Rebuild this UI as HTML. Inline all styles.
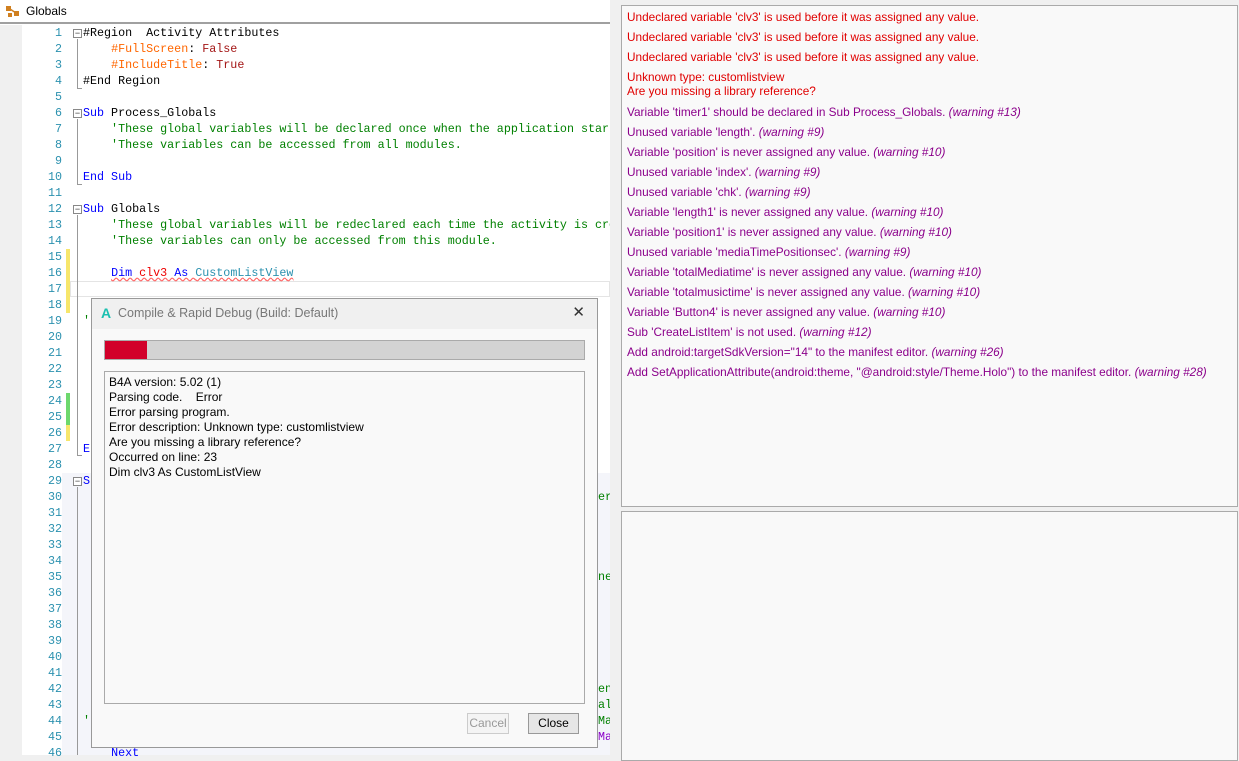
<!DOCTYPE html>
<html><head><meta charset="utf-8"><style>
*{margin:0;padding:0;box-sizing:border-box}
body{width:1239px;height:755px;background:#f0f0f0;position:relative;overflow:hidden;font-family:"Liberation Sans",sans-serif}
.abs{position:absolute}
#ed{left:0;top:0;width:610px;height:755px;background:#fff}
#title{left:0;top:0;width:610px;height:24px;background:#fff;border-bottom:2px solid #a0a0a0;font-size:12px;line-height:22px;padding-left:26px;color:#000}
#strip{left:0;top:25px;width:22px;height:730px;background:#f0f0f0}
#shade{left:62px;top:473px;width:548px;height:282px;background:#f4f5fa}
.ln{position:absolute;left:22px;width:40px;text-align:right;font-family:"Liberation Mono",monospace;font-size:11.7px;color:#2b91af;height:16px;line-height:16px}
.code{position:absolute;left:83px;font-family:"Liberation Mono",monospace;font-size:11.7px;height:16px;line-height:16px;white-space:pre;color:#000}
.cm{color:#008000}.kw{color:#0000ff}.dir{color:#ff6600}.val{color:#a31515}.ty{color:#2b91af}.rd{color:#e00}
.fold{position:absolute;left:73px;width:9px;height:9px;border:1px solid #888;background:#fff;font-size:9px;line-height:6px;text-align:center;color:#333}
.vl{position:absolute;left:77px;width:1px;background:#999}
.bar{position:absolute;left:66px;width:4px}
#rp1{left:621px;top:5px;width:617px;height:502px;background:#f9f9f9;border:1px solid #aaa}
#rp2{left:621px;top:511px;width:617px;height:250px;background:#f9f9f9;border:1px solid #aaa}
.m{position:absolute;left:5px;font-size:11.8px;white-space:nowrap;line-height:14px}
.r{color:#e00000}.p{color:#8b008b}.m i{color:#8b008b}
#dlg{left:91px;top:298px;width:507px;height:450px;background:#f9f9f9;border:1px solid #999}
#dt{left:0;top:0;width:505px;height:30px;background:#f0f0f0;font-size:12.5px;line-height:28px;color:#777;padding-left:26px}
#box{left:12px;top:72px;width:481px;height:333px;border:1px solid #aaa;background:#f9f9f9;font-size:12px;line-height:15px;padding:3px 4px;color:#000}
.btn{position:absolute;top:414px;height:21px;border:1px solid #aaa;font-size:12px;text-align:center;line-height:19px}
</style></head><body>
<div id="ed" class="abs"></div>
<div id="shade" class="abs"></div>
<div id="strip" class="abs"></div>
<div id="title" class="abs">Globals</div>
<svg class="abs" style="left:5px;top:5px" width="16" height="14" viewBox="0 0 16 14"><rect x="1" y="1" width="5" height="5" fill="#d08020"/><rect x="9" y="6" width="5" height="5" fill="#d08020"/><rect x="3" y="8" width="4" height="4" fill="#d08020"/><path d="M5 4 L11 8" stroke="#d08020" stroke-width="1.5"/></svg>

<div class="abs" style="left:70px;top:281px;width:540px;height:16px;border:1px solid #e4e4e4;background:#fff"></div>

<div class="bar" style="top:249px;height:64px;background:#f7e66b"></div>
<div class="bar" style="top:393px;height:32px;background:#6dd86d"></div>
<div class="bar" style="top:425px;height:16px;background:#f7e66b"></div>

<div class="fold" style="top:29px">−</div><div class="vl" style="top:39px;height:50px"></div>
<div class="abs" style="left:77px;top:88px;width:5px;height:1px;background:#999"></div>
<div class="fold" style="top:109px">−</div><div class="vl" style="top:119px;height:66px"></div>
<div class="abs" style="left:77px;top:184px;width:5px;height:1px;background:#999"></div>
<div class="fold" style="top:205px">−</div><div class="vl" style="top:215px;height:240px"></div>
<div class="abs" style="left:77px;top:455px;width:5px;height:1px;background:#999"></div>
<div class="fold" style="top:477px">−</div><div class="vl" style="top:487px;height:268px"></div>

<div class="code" style="top:25px">#Region  Activity Attributes</div>
<div class="code" style="top:41px">    <span class="dir">#FullScreen</span>: <span class="val">False</span></div>
<div class="code" style="top:57px">    <span class="dir">#IncludeTitle</span>: <span class="val">True</span></div>
<div class="code" style="top:73px">#End Region</div>
<div class="code" style="top:105px"><span class="kw">Sub</span> Process_Globals</div>
<div class="code cm" style="top:121px">    'These global variables will be declared once when the application starts.</div>
<div class="code cm" style="top:137px">    'These variables can be accessed from all modules.</div>
<div class="code" style="top:169px"><span class="kw">End Sub</span></div>
<div class="code" style="top:201px"><span class="kw">Sub</span> Globals</div>
<div class="code cm" style="top:217px">    'These global variables will be redeclared each time the activity is created.</div>
<div class="code cm" style="top:233px">    'These variables can only be accessed from this module.</div>
<div class="code" style="top:265px">    <span style="text-decoration:underline wavy #f66"><span class="kw">Dim</span> <span class="rd">clv3</span> <span class="kw">As</span> <span class="ty">CustomListView</span></span></div>
<div class="code cm" style="top:313px">'</div>
<div class="code kw" style="top:441px">E</div>
<div class="code kw" style="top:473px">S</div>
<div class="code" style="top:745px">    <span class="kw">Next</span></div>
<div class="code cm" style="left:598px;top:489px">er</div>
<div class="code cm" style="left:598px;top:569px">ne</div>
<div class="code cm" style="left:598px;top:681px">en</div>
<div class="code cm" style="left:598px;top:697px">al</div>
<div class="code cm" style="left:598px;top:713px">Ma</div>
<div class="code" style="left:598px;top:729px;color:#8b00c8">Ma</div>
<div class="code cm" style="left:83px;top:713px">'</div>

<div class="abs" style="left:610px;top:24px;width:11px;height:731px;background:#f0f0f0"></div>

<div id="dlg" class="abs">
 <div id="dt" class="abs"><span style="position:absolute;left:9px;top:0;color:#1bc0b0;font-weight:bold;font-size:14px">A</span>Compile &amp; Rapid Debug (Build: Default)<span style="position:absolute;right:12px;top:0;color:#333;font-size:15px">✕</span></div>
 <div class="abs" style="left:12px;top:41px;width:481px;height:20px;background:#d3d3d3;border:1px solid #aaa"><div style="width:42px;height:18px;background:#d2002a"></div></div>
 <div id="box" class="abs">B4A version: 5.02 (1)<br>Parsing code.&nbsp;&nbsp;&nbsp;&nbsp;Error<br>Error parsing program.<br>Error description: Unknown type: customlistview<br>Are you missing a library reference?<br>Occurred on line: 23<br>Dim clv3 As CustomListView</div>
 <div class="btn" style="left:375px;width:42px;color:#999;border-color:#ccc;background:#f4f4f4">Cancel</div>
 <div class="btn" style="left:436px;width:51px;background:#e6e6e6;border-color:#999">Close</div>
</div>

<div id="rp1" class="abs">
<div class="m r" style="top:4px">Undeclared variable 'clv3' is used before it was assigned any value.</div>
<div class="m r" style="top:24px">Undeclared variable 'clv3' is used before it was assigned any value.</div>
<div class="m r" style="top:44px">Undeclared variable 'clv3' is used before it was assigned any value.</div>
<div class="m r" style="top:64px">Unknown type: customlistview</div>
<div class="m r" style="top:78px">Are you missing a library reference?</div>
<div class="m p" style="top:99px">Variable 'timer1' should be declared in Sub Process_Globals. <i>(warning #13)</i></div>
<div class="m p" style="top:119px">Unused variable 'length'. <i>(warning #9)</i></div>
<div class="m p" style="top:139px">Variable 'position' is never assigned any value. <i>(warning #10)</i></div>
<div class="m p" style="top:159px">Unused variable 'index'. <i>(warning #9)</i></div>
<div class="m p" style="top:179px">Unused variable 'chk'. <i>(warning #9)</i></div>
<div class="m p" style="top:199px">Variable 'length1' is never assigned any value. <i>(warning #10)</i></div>
<div class="m p" style="top:219px">Variable 'position1' is never assigned any value. <i>(warning #10)</i></div>
<div class="m p" style="top:239px">Unused variable 'mediaTimePositionsec'. <i>(warning #9)</i></div>
<div class="m p" style="top:259px">Variable 'totalMediatime' is never assigned any value. <i>(warning #10)</i></div>
<div class="m p" style="top:279px">Variable 'totalmusictime' is never assigned any value. <i>(warning #10)</i></div>
<div class="m p" style="top:299px">Variable 'Button4' is never assigned any value. <i>(warning #10)</i></div>
<div class="m p" style="top:319px">Sub 'CreateListItem' is not used. <i>(warning #12)</i></div>
<div class="m p" style="top:339px">Add android:targetSdkVersion="14" to the manifest editor. <i>(warning #26)</i></div>
<div class="m p" style="top:359px">Add SetApplicationAttribute(android:theme, "@android:style/Theme.Holo") to the manifest editor. <i>(warning #28)</i></div>
</div>
<div id="rp2" class="abs"></div>

<div class="ln" style="top:25px">1</div><div class="ln" style="top:41px">2</div><div class="ln" style="top:57px">3</div><div class="ln" style="top:73px">4</div><div class="ln" style="top:89px">5</div><div class="ln" style="top:105px">6</div><div class="ln" style="top:121px">7</div><div class="ln" style="top:137px">8</div><div class="ln" style="top:153px">9</div><div class="ln" style="top:169px">10</div><div class="ln" style="top:185px">11</div><div class="ln" style="top:201px">12</div><div class="ln" style="top:217px">13</div><div class="ln" style="top:233px">14</div><div class="ln" style="top:249px">15</div><div class="ln" style="top:265px">16</div><div class="ln" style="top:281px">17</div><div class="ln" style="top:297px">18</div><div class="ln" style="top:313px">19</div><div class="ln" style="top:329px">20</div><div class="ln" style="top:345px">21</div><div class="ln" style="top:361px">22</div><div class="ln" style="top:377px">23</div><div class="ln" style="top:393px">24</div><div class="ln" style="top:409px">25</div><div class="ln" style="top:425px">26</div><div class="ln" style="top:441px">27</div><div class="ln" style="top:457px">28</div><div class="ln" style="top:473px">29</div><div class="ln" style="top:489px">30</div><div class="ln" style="top:505px">31</div><div class="ln" style="top:521px">32</div><div class="ln" style="top:537px">33</div><div class="ln" style="top:553px">34</div><div class="ln" style="top:569px">35</div><div class="ln" style="top:585px">36</div><div class="ln" style="top:601px">37</div><div class="ln" style="top:617px">38</div><div class="ln" style="top:633px">39</div><div class="ln" style="top:649px">40</div><div class="ln" style="top:665px">41</div><div class="ln" style="top:681px">42</div><div class="ln" style="top:697px">43</div><div class="ln" style="top:713px">44</div><div class="ln" style="top:729px">45</div><div class="ln" style="top:745px">46</div>
</body></html>
